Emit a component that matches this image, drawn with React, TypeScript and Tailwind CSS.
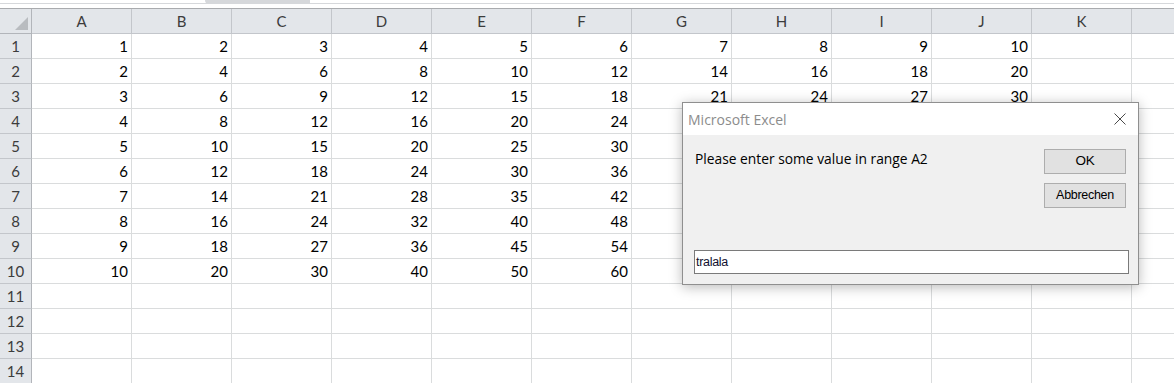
import { Fragment } from 'react'

const COLS = ['A', 'B', 'C', 'D', 'E', 'F', 'G', 'H', 'I', 'J', 'K', '']
const ROWS = Array.from({ length: 14 }, (_, i) => i + 1)

function cellValue(row: number, colIndex: number): string {
  if (row > 10 || colIndex > 9) return ''
  return String(row * (colIndex + 1))
}

function Dialog() {
  return (
    <div className="absolute left-[682px] top-[102px] w-[457px] h-[183px] flex flex-col border border-[#8f8f8f] bg-[#f0f0f0] shadow-[0_2px_12px_rgba(0,0,0,0.28)] font-['Open_Sans',sans-serif]">
      <div className="h-[32px] bg-white flex items-center justify-between pl-[5px] pr-[12px]">
        <span className="text-[14px] text-[#8c8c8c]">Microsoft Excel</span>
        <svg width="12" height="12" viewBox="0 0 12 12" className="text-[#4a4a4a]">
          <path d="M0.5 0.5 L11.5 11.5 M11.5 0.5 L0.5 11.5" stroke="currentColor" strokeWidth="1" />
        </svg>
      </div>
      <div className="flex-1 flex flex-col justify-between pt-[14px] pl-[11px] pr-[9px] pb-[10px]">
        <div className="flex justify-between pr-[3px]">
          <div className="pl-[1px] pt-[1px] text-[13.8px] leading-[18px] text-black">
            Please enter some value in range A2
          </div>
          <div className="flex flex-col gap-[9px] font-['Liberation_Sans',sans-serif] text-[12.5px] tracking-[-0.3px] text-black">
            <button className="w-[82px] h-[25px] bg-[#e1e1e1] border border-[#adadad] text-[13.5px]">OK</button>
            <button className="w-[82px] h-[25px] bg-[#e1e1e1] border border-[#adadad]">Abbrechen</button>
          </div>
        </div>
        <div className="h-[24px] bg-white border border-[#7a7a7a] flex items-center px-[1px] text-[12.5px] tracking-[-0.3px] text-[#101030] font-['Liberation_Sans',sans-serif]">
          tralala
        </div>
      </div>
    </div>
  )
}

export default function App() {
  return (
    <div className="relative w-[1174px] h-[383px] overflow-hidden bg-white font-['Lato',sans-serif]">
      <div className="relative h-[9px] border-b border-[#a9abae] bg-white">
        <div className="absolute left-0 top-[3px] w-full h-px bg-[#d6d8db]" />
        <div className="absolute left-[205px] top-0 w-[105px] h-[4px] rounded-bl-[6px] bg-[#d6d8db]" />
      </div>
      <div className="grid grid-cols-[32px_repeat(12,100px)] w-[1232px]">
        <div className="h-[25px] bg-[#e3e6ea] border-r border-b border-[#b2b5ba] flex items-end justify-end p-[3px]">
          <div className="w-0 h-0 border-l-[13px] border-l-transparent border-b-[13px] border-b-[#b9bcc0]" />
        </div>
        {COLS.map((c, i) => (
          <div
            key={`h${i}`}
            className="h-[25px] bg-[#e3e6ea] border-r border-b border-[#c3c6cb] flex items-center justify-center text-[15px] text-[#3c3c3c]"
          >
            {c}
          </div>
        ))}
        {ROWS.map((r) => (
          <Fragment key={r}>
            <div className="h-[25px] bg-[#e3e6ea] border-r border-b border-r-[#b2b5ba] border-b-[#c3c6cb] flex items-center justify-center text-[15px] text-[#3c3c3c]">
              {r}
            </div>
            {COLS.map((_, ci) => (
              <div
                key={ci}
                className="h-[25px] border-r border-b border-[#dadcdd] flex items-center justify-end pr-[3px] text-[15px] text-black"
              >
                {cellValue(r, ci)}
              </div>
            ))}
          </Fragment>
        ))}
      </div>
      <Dialog />
    </div>
  )
}
